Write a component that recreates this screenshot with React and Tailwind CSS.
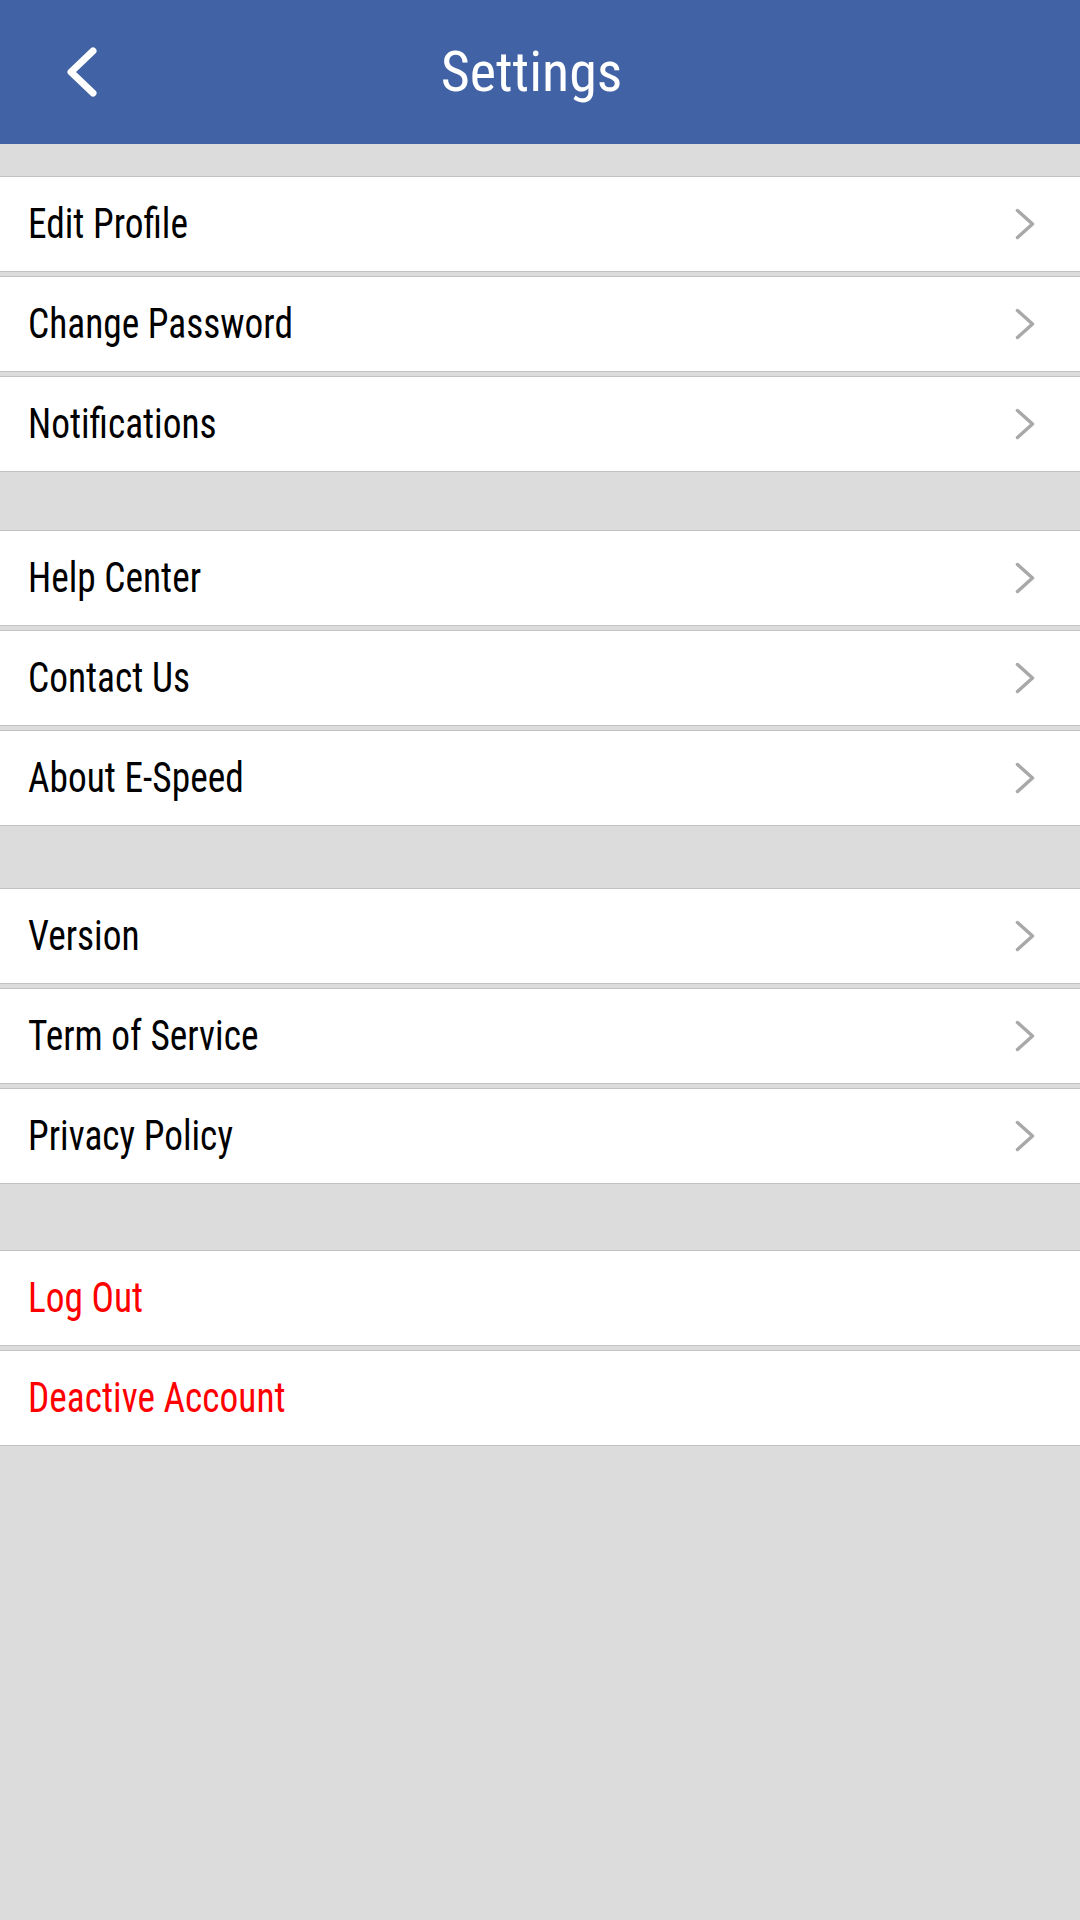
const groups = [
  { mt: "mt-[32px]", items: ["Edit Profile", "Change Password", "Notifications"] },
  { mt: "mt-[58px]", items: ["Help Center", "Contact Us", "About E-Speed"] },
  { mt: "mt-[62px]", items: ["Version", "Term of Service", "Privacy Policy"] },
  { mt: "mt-[66px]", items: ["Log Out", "Deactive Account"], danger: true },
];

const Chevron = () => (
  <svg width="20" height="32" viewBox="0 0 20 32" fill="none" aria-hidden="true">
    <polyline
      points="2.5,2.5 17.5,16 2.5,29.5"
      stroke="#a9a9a9"
      strokeWidth="3.5"
      strokeLinecap="round"
      strokeLinejoin="round"
    />
  </svg>
);

const Row = ({ label, danger }) => (
  <div className="h-[96px] bg-white border-y border-[#c2c2c2] flex items-center justify-between pl-[28px] pr-[45px]">
    <span
      className={
        "text-[42px] leading-none origin-left scale-x-[0.89] " +
        (danger ? "text-[#ff0000]" : "text-black")
      }
    >
      {label}
    </span>
    {!danger && <Chevron />}
  </div>
);

export default function App() {
  return (
    <div className="min-h-screen bg-[#dcdcdc] font-['Roboto_Condensed','Roboto',sans-serif]">
      <header className="h-[144px] bg-[#4163a5] flex items-center">
        <div className="w-[97px] pl-[67px] flex items-center">
          <svg width="30" height="50" viewBox="0 0 30 50" fill="none" aria-hidden="true">
            <polyline
              points="26,4 4,25 26,46"
              stroke="#ffffff"
              strokeWidth="7"
              strokeLinecap="round"
              strokeLinejoin="round"
            />
          </svg>
        </div>
        <h1 className="flex-1 text-center text-white text-[56px] leading-none">Settings</h1>
        <div className="w-[114px]" />
      </header>

      {groups.map((g, i) => (
        <div key={i} className={g.mt + " flex flex-col gap-1"}>
          {g.items.map((label) => (
            <Row key={label} label={label} danger={g.danger} />
          ))}
        </div>
      ))}
    </div>
  );
}
